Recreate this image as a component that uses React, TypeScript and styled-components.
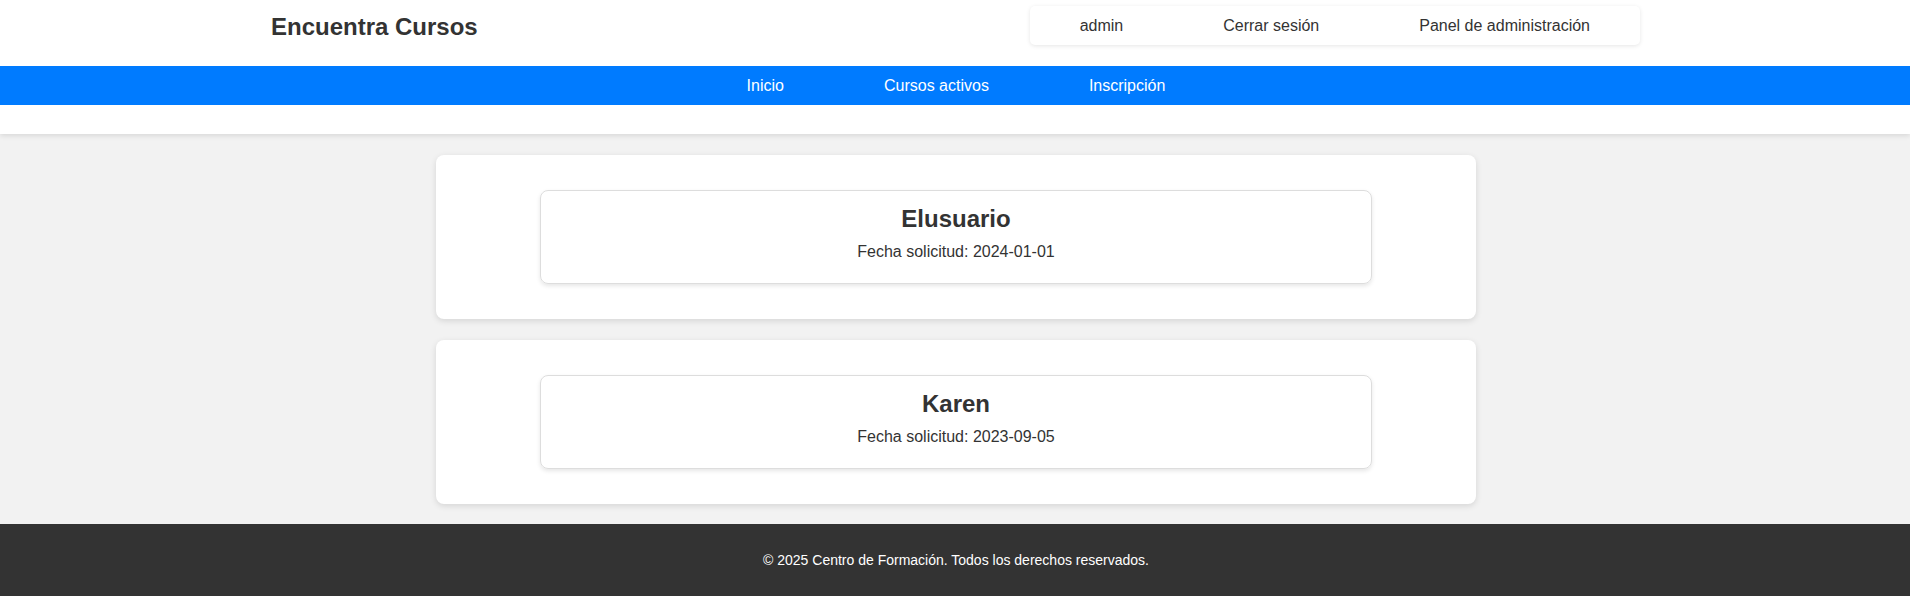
import React from "react";
import styled, { createGlobalStyle } from "styled-components";

const GlobalStyle = createGlobalStyle`
  html, body { margin: 0; padding: 0; }
  body {
    font-family: "Liberation Sans", Arial, sans-serif;
    background: #f2f2f2;
    color: #333;
  }
  * { box-sizing: border-box; }
`;

const Page = styled.div`
  min-height: 596px;
  display: flex;
  flex-direction: column;
`;

const Header = styled.header`
  background: #fff;
  padding-bottom: 29px;
  box-shadow: 0 2px 5px rgba(0, 0, 0, 0.1);
  position: relative;
  z-index: 1;
`;

const TopRow = styled.div`
  width: 1370px;
  margin: 0 auto;
  height: 66px;
  padding: 6px 0 21px;
  display: flex;
  align-items: center;
  justify-content: space-between;
`;

const Brand = styled.h1`
  margin: 3px 0 0 1px;
  font-size: 24px;
  font-weight: bold;
  color: #333;
`;

const UserBox = styled.div`
  display: flex;
  align-items: center;
  height: 39px;
  background: #fff;
  border-radius: 5px;
  box-shadow: 0 1px 4px rgba(0, 0, 0, 0.1);
`;

const UserLink = styled.a`
  padding: 0 50px;
  font-size: 16px;
  color: #333;
  text-decoration: none;
`;

const NavBar = styled.nav`
  background: #007bff;
  height: 39px;
  padding-left: 2px;
  display: flex;
  justify-content: center;
  align-items: center;
`;

const NavLink = styled.a`
  padding: 0 50px;
  font-size: 16px;
  color: #fff;
  text-decoration: none;
`;

const Main = styled.main`
  flex: 1;
  padding: 21px 0 20px 2px;
  display: flex;
  flex-direction: column;
  align-items: center;
  gap: 21px;
`;

const Card = styled.section`
  width: 1040px;
  background: #fff;
  border-radius: 8px;
  box-shadow: 0 2px 6px rgba(0, 0, 0, 0.12);
  padding: 35px 0;
  display: flex;
  justify-content: center;
`;

const Request = styled.div`
  width: 80%;
  height: 94px;
  border: 1px solid #ddd;
  border-radius: 8px;
  box-shadow: 0 2px 4px rgba(0, 0, 0, 0.1);
  padding: 14px 15px 0;
  text-align: center;
`;

const Name = styled.h3`
  margin: 0 0 10px;
  font-size: 24px;
  font-weight: bold;
  line-height: 28px;
  color: #333;
`;

const DateLine = styled.p`
  margin: 0;
  font-size: 16px;
  line-height: 18px;
  color: #333;
`;

const Footer = styled.footer`
  background: #333;
  color: #fff;
  height: 72px;
  padding-left: 2px;
  display: flex;
  align-items: center;
  justify-content: center;
  font-size: 14px;
`;

const requests = [
  { name: "Elusuario", date: "2024-01-01" },
  { name: "Karen", date: "2023-09-05" },
];

export default function App() {
  return (
    <>
      <GlobalStyle />
      <Page>
        <Header>
          <TopRow>
            <Brand>Encuentra Cursos</Brand>
            <UserBox>
              <UserLink href="#">admin</UserLink>
              <UserLink href="#">Cerrar sesión</UserLink>
              <UserLink href="#">Panel de administración</UserLink>
            </UserBox>
          </TopRow>
          <NavBar>
            <NavLink href="#">Inicio</NavLink>
            <NavLink href="#">Cursos activos</NavLink>
            <NavLink href="#">Inscripción</NavLink>
          </NavBar>
        </Header>
        <Main>
          {requests.map((r) => (
            <Card key={r.name}>
              <Request>
                <Name>{r.name}</Name>
                <DateLine>Fecha solicitud: {r.date}</DateLine>
              </Request>
            </Card>
          ))}
        </Main>
        <Footer>© 2025 Centro de Formación. Todos los derechos reservados.</Footer>
      </Page>
    </>
  );
}
